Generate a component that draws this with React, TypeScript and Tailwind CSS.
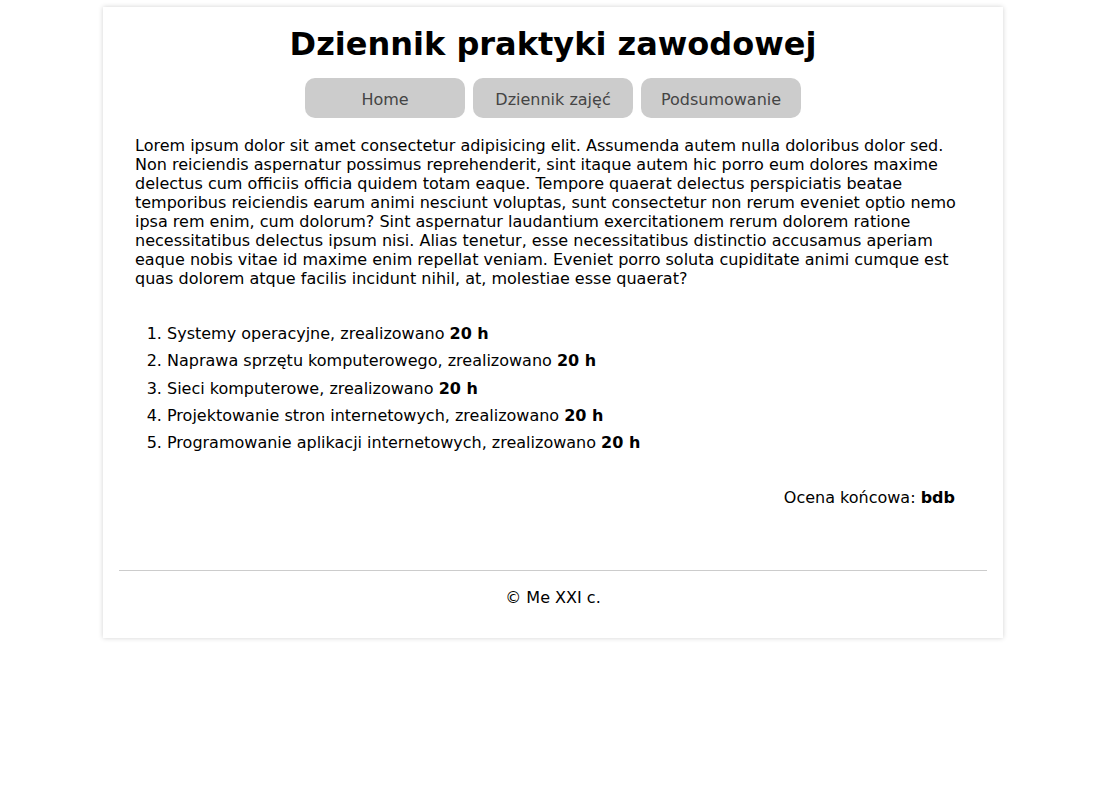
import React from "react";

const items = [
  "Systemy operacyjne",
  "Naprawa sprzętu komputerowego",
  "Sieci komputerowe",
  "Projektowanie stron internetowych",
  "Programowanie aplikacji internetowych",
];

export default function App() {
  return (
    <div
      className="min-h-[794px] bg-white text-black pt-[7px]"
      style={{ fontFamily: '"DejaVu Sans", Verdana, sans-serif' }}
    >
      <div className="ml-[103px] w-[900px] bg-white shadow-[0_0_5px_rgba(0,0,0,0.18)] px-4 pb-[31px]">
        <h1 className="pt-[18px] text-center text-[32px] leading-[38px] font-bold">
          Dziennik praktyki zawodowej
        </h1>
        <nav className="mt-[15px] flex justify-center gap-2">
          {["Home", "Dziennik zajęć", "Podsumowanie"].map((t) => (
            <a
              key={t}
              className="flex h-10 w-40 items-center justify-center rounded-[10px] bg-[#cccccc] pt-[3px] text-base text-[#444444]"
            >
              {t}
            </a>
          ))}
        </nav>
        <main className="px-4">
          <p className="mt-[18px] text-base leading-[19px]">
            Lorem ipsum dolor sit amet consectetur adipisicing elit. Assumenda autem nulla doloribus dolor sed. Non reiciendis aspernatur possimus reprehenderit, sint itaque autem hic porro eum dolores maxime delectus cum officiis officia quidem totam eaque. Tempore quaerat delectus perspiciatis beatae temporibus reiciendis earum animi nesciunt voluptas, sunt consectetur non rerum eveniet optio nemo ipsa rem enim, cum dolorum? Sint aspernatur laudantium exercitationem rerum dolorem ratione necessitatibus delectus ipsum nisi. Alias tenetur, esse necessitatibus distinctio accusamus aperiam eaque nobis vitae id maxime enim repellat veniam. Eveniet porro soluta cupiditate animi cumque est quas dolorem atque facilis incidunt nihil, at, molestiae esse quaerat?
          </p>
          <ol className="mt-[36px] list-decimal pl-8 flex flex-col gap-[8.3px] text-base leading-[19px]">
            {items.map((t) => (
              <li key={t}>
                {t}, zrealizowano <b className="font-bold">20 h</b>
              </li>
            ))}
          </ol>
          <p className="mt-[36px] pr-4 text-right text-base leading-[19px]">
            Ocena końcowa: <b className="font-bold">bdb</b>
          </p>
        </main>
        <footer>
          <div className="mt-[63px] h-px bg-[#cccccc]" />
          <p className="mt-[17px] text-center text-base leading-[19px]">© Me XXI c.</p>
        </footer>
      </div>
    </div>
  );
}
